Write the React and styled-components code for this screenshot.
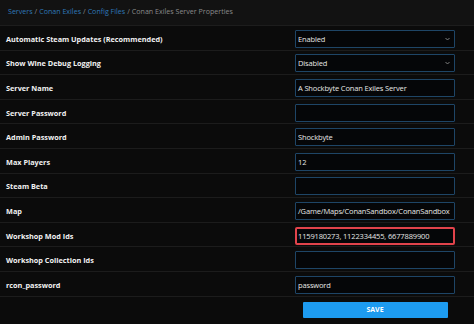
import React from "react";
import styled, { createGlobalStyle } from "styled-components";

const Global = createGlobalStyle`
  html, body { margin: 0; padding: 0; background: #0b0b0b; }
  body { font-family: "Open Sans", "Liberation Sans", sans-serif; }
`;

const Page = styled.div`
  width: 474px;
  height: 324px;
  background: #0b0b0b;
  overflow: hidden;
  display: flex;
  flex-direction: column;
`;

const Crumbs = styled.div`
  height: 26px;
  flex-shrink: 0;
  box-sizing: border-box;
  background: #121212;
  border-bottom: 1px solid #1d1d1d;
  padding: 0 8px 3px;
  display: flex;
  align-items: center;
  gap: 2px;
  font-size: 7.1px;
  color: #8a8a8a;
`;

const Crumb = styled.span`
  color: ${(p) => (p.$link ? "#2f78b8" : "#8a8a8a")};
`;

const Row = styled.div`
  height: 24.6px;
  flex-shrink: 0;
  box-sizing: border-box;
  border-bottom: 1px solid #1c1c1c;
  display: grid;
  grid-template-columns: 1fr 160px;
  align-items: center;
  padding: 0 19px 0 6px;
`;

const Label = styled.div`
  font-size: 7.3px;
  font-weight: 700;
  color: #f2f2f2;
  white-space: nowrap;
  margin-top: 2px;
`;

const Field = styled.div`
  position: relative;
  height: 18px;
  margin-top: 2px;
  box-sizing: border-box;
  background: #050608;
  border: ${(p) => (p.$error ? "2px solid #e2434b" : "1px solid #1e4566")};
  border-radius: ${(p) => (p.$error ? "2px" : "1px")};
  display: flex;
  align-items: center;
  padding: 0 ${(p) => (p.$error ? "1px" : "2px")};
  font-size: 7.5px;
  color: #e6e6e6;
  white-space: nowrap;
  overflow: hidden;
  letter-spacing: -0.15px;
`;

const Chevron = styled.svg`
  position: absolute;
  right: 4px;
  top: 6px;
`;

const Footer = styled.div`
  display: grid;
  grid-template-columns: 1fr 160px;
  padding: 5px 19px 0 6px;
`;

const SaveButton = styled.button`
  grid-column: 2;
  justify-self: center;
  width: 145px;
  height: 16px;
  border: none;
  border-radius: 1px;
  background: #1d9bf0;
  color: #ffffff;
  font-family: "Open Sans", "Liberation Sans", sans-serif;
  font-size: 7px;
  font-weight: 700;
  padding: 0;
`;

const rows = [
  { label: "Automatic Steam Updates (Recommended)", value: "Enabled", select: true },
  { label: "Show Wine Debug Logging", value: "Disabled", select: true },
  { label: "Server Name", value: "A Shockbyte Conan Exiles Server" },
  { label: "Server Password", value: "" },
  { label: "Admin Password", value: "Shockbyte" },
  { label: "Max Players", value: "12" },
  { label: "Steam Beta", value: "" },
  { label: "Map", value: "/Game/Maps/ConanSandbox/ConanSandbox" },
  { label: "Workshop Mod Ids", value: "1159180273, 1122334455, 6677889900", error: true },
  { label: "Workshop Collection Ids", value: "" },
  { label: "rcon_password", value: "password" },
];

export default function App() {
  return (
    <Page>
      <Global />
      <Crumbs>
        <Crumb $link>Servers</Crumb>/<Crumb $link>Conan Exiles</Crumb>/
        <Crumb $link>Config Files</Crumb>/<Crumb>Conan Exiles Server Properties</Crumb>
      </Crumbs>
      {rows.map((r) => (
        <Row key={r.label}>
          <Label>{r.label}</Label>
          <Field $error={r.error}>
            {r.value}
            {r.select && (
              <Chevron width="5" height="4" viewBox="0 0 5 4">
                <path d="M0.5 1 L2.5 3 L4.5 1" fill="none" stroke="#8a8a8a" strokeWidth="0.9" />
              </Chevron>
            )}
          </Field>
        </Row>
      ))}
      <Footer>
        <SaveButton>SAVE</SaveButton>
      </Footer>
    </Page>
  );
}
